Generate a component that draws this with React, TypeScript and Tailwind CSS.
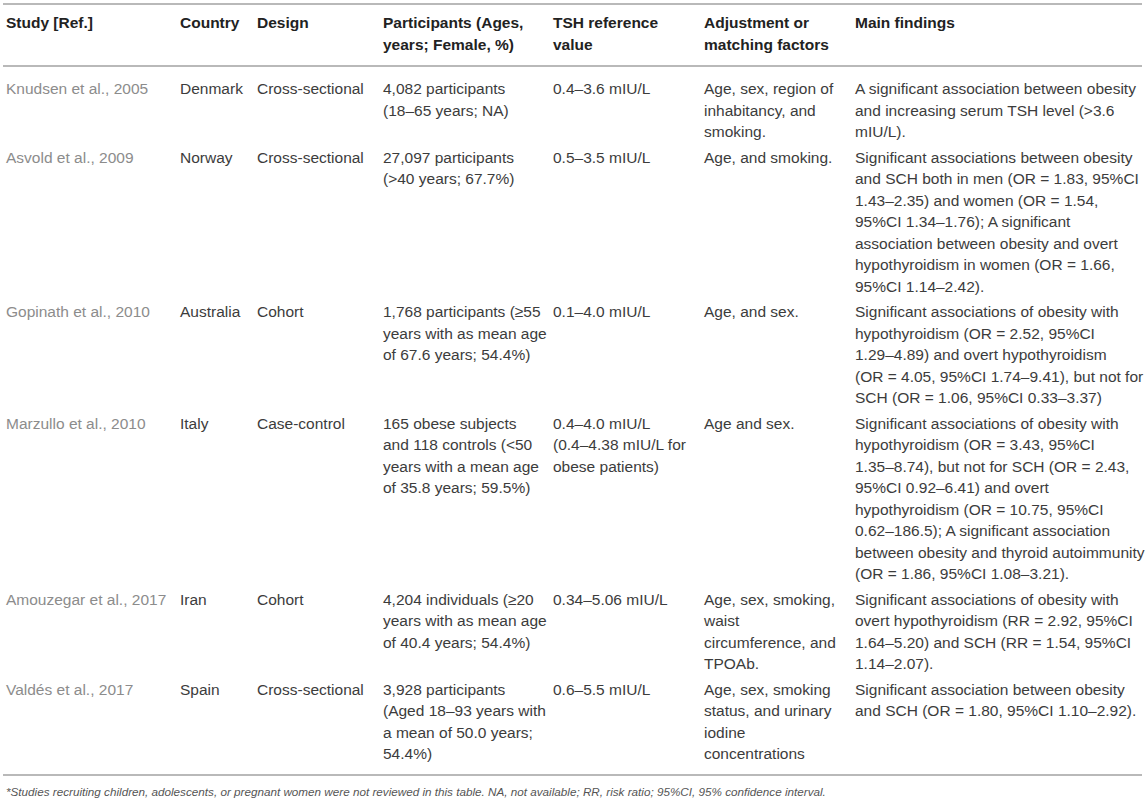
import React from "react";

type Row = {
  study: string[];
  country: string[];
  design: string[];
  participants: string[];
  tsh: string[];
  adjust: string[];
  findings: string[];
};

const rows: Row[] = [
  {
    study: ["Knudsen et al., 2005"],
    country: ["Denmark"],
    design: ["Cross-sectional"],
    participants: ["4,082 participants", "(18–65 years; NA)"],
    tsh: ["0.4–3.6 mIU/L"],
    adjust: ["Age, sex, region of", "inhabitancy, and", "smoking."],
    findings: [
      "A significant association between obesity",
      "and increasing serum TSH level (>3.6",
      "mIU/L).",
    ],
  },
  {
    study: ["Asvold et al., 2009"],
    country: ["Norway"],
    design: ["Cross-sectional"],
    participants: ["27,097 participants", "(>40 years; 67.7%)"],
    tsh: ["0.5–3.5 mIU/L"],
    adjust: ["Age, and smoking."],
    findings: [
      "Significant associations between obesity",
      "and SCH both in men (OR = 1.83, 95%CI",
      "1.43–2.35) and women (OR = 1.54,",
      "95%CI 1.34–1.76); A significant",
      "association between obesity and overt",
      "hypothyroidism in women (OR = 1.66,",
      "95%CI 1.14–2.42).",
    ],
  },
  {
    study: ["Gopinath et al., 2010"],
    country: ["Australia"],
    design: ["Cohort"],
    participants: ["1,768 participants (≥55", "years with as mean age", "of 67.6 years; 54.4%)"],
    tsh: ["0.1–4.0 mIU/L"],
    adjust: ["Age, and sex."],
    findings: [
      "Significant associations of obesity with",
      "hypothyroidism (OR = 2.52, 95%CI",
      "1.29–4.89) and overt hypothyroidism",
      "(OR = 4.05, 95%CI 1.74–9.41), but not for",
      "SCH (OR = 1.06, 95%CI 0.33–3.37)",
    ],
  },
  {
    study: ["Marzullo et al., 2010"],
    country: ["Italy"],
    design: ["Case-control"],
    participants: [
      "165 obese subjects",
      "and 118 controls (<50",
      "years with a mean age",
      "of 35.8 years; 59.5%)",
    ],
    tsh: ["0.4–4.0 mIU/L", "(0.4–4.38 mIU/L for", "obese patients)"],
    adjust: ["Age and sex."],
    findings: [
      "Significant associations of obesity with",
      "hypothyroidism (OR = 3.43, 95%CI",
      "1.35–8.74), but not for SCH (OR = 2.43,",
      "95%CI 0.92–6.41) and overt",
      "hypothyroidism (OR = 10.75, 95%CI",
      "0.62–186.5); A significant association",
      "between obesity and thyroid autoimmunity",
      "(OR = 1.86, 95%CI 1.08–3.21).",
    ],
  },
  {
    study: ["Amouzegar et al., 2017"],
    country: ["Iran"],
    design: ["Cohort"],
    participants: ["4,204 individuals (≥20", "years with as mean age", "of 40.4 years; 54.4%)"],
    tsh: ["0.34–5.06 mIU/L"],
    adjust: ["Age, sex, smoking,", "waist", "circumference, and", "TPOAb."],
    findings: [
      "Significant associations of obesity with",
      "overt hypothyroidism (RR = 2.92, 95%CI",
      "1.64–5.20) and SCH (RR = 1.54, 95%CI",
      "1.14–2.07).",
    ],
  },
  {
    study: ["Valdés et al., 2017"],
    country: ["Spain"],
    design: ["Cross-sectional"],
    participants: [
      "3,928 participants",
      "(Aged 18–93 years with",
      "a mean of 50.0 years;",
      "54.4%)",
    ],
    tsh: ["0.6–5.5 mIU/L"],
    adjust: ["Age, sex, smoking", "status, and urinary", "iodine", "concentrations"],
    findings: [
      "Significant association between obesity",
      "and SCH (OR = 1.80, 95%CI 1.10–2.92).",
    ],
  },
];

const header: string[][] = [
  ["Study [Ref.]"],
  ["Country"],
  ["Design"],
  ["Participants (Ages,", "years; Female, %)"],
  ["TSH reference", "value"],
  ["Adjustment or", "matching factors"],
  ["Main findings"],
];

const grid = "grid grid-cols-[174px_77px_126px_170px_151px_151px_1fr] pl-[6px]";

function Cell({ lines, className = "" }: { lines: string[]; className?: string }) {
  return (
    <div className={className}>
      {lines.map((l, i) => (
        <div key={i} className="whitespace-nowrap">
          {l}
        </div>
      ))}
    </div>
  );
}

function Rule() {
  return <div className="ml-[3px] w-[1139px] h-[2px] bg-[#b9b9b9]" />;
}

export default function App() {
  return (
    <div
      className="w-[1145px] h-[803px] bg-white overflow-hidden text-[15.5px] leading-[21.5px] text-[#3c3c3c]"
      style={{ fontFamily: '"Liberation Sans", Arial, Helvetica, sans-serif' }}
    >
      <div className="pt-[3px]">
        <Rule />
        <div className={`${grid} pt-[7px] pb-[9px] font-bold text-[#222] leading-[22px]`}>
          {header.map((h, i) => (
            <Cell key={i} lines={h} />
          ))}
        </div>
        <Rule />
        <div className="pt-[11px] pb-[9px] flex flex-col gap-[4px]">
          {rows.map((r) => (
            <div key={r.study[0]} className={grid}>
              <Cell lines={r.study} className="text-[#8c8c8c]" />
              <Cell lines={r.country} />
              <Cell lines={r.design} />
              <Cell lines={r.participants} />
              <Cell lines={r.tsh} />
              <Cell lines={r.adjust} />
              <Cell lines={r.findings} />
            </div>
          ))}
        </div>
        <Rule />
        <div className="pl-[6px] pt-[7px] text-[11.7px] leading-[18px] italic text-[#555]">
          *Studies recruiting children, adolescents, or pregnant women were not reviewed in this
          table. NA, not available; RR, risk ratio; 95%CI, 95% confidence interval.
        </div>
      </div>
    </div>
  );
}
